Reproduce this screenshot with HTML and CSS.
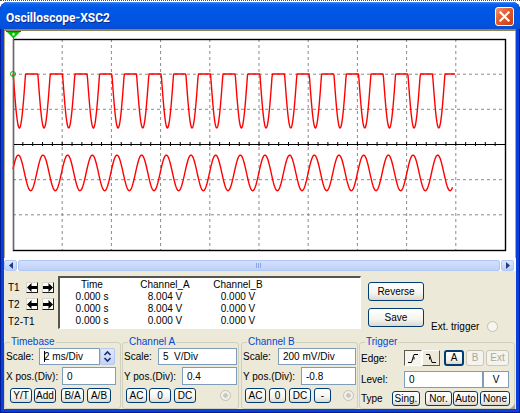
FILE: index.html
```html
<!DOCTYPE html>
<html lang="en">
<head>
    <meta charset="UTF-8">
    <title>Oscilloscope-XSC2</title>
    <link rel="stylesheet" href="styles.css">
</head>
<body>
    <div class="desk-edge"></div>
    <div class="window">
        <div class="titlebar">
            <span class="title">Oscilloscope-XSC2</span>
            <div class="close-btn">
                <svg width="17" height="17" viewBox="0 0 17 17"><path d="M4.5 4.5 L12.5 12.5 M12.5 4.5 L4.5 12.5" stroke="#fff" stroke-width="2.2" stroke-linecap="square"/></svg>
            </div>
        </div>
        <div class="client">
            <div class="screen">
                <svg id="scope" width="510" height="227" viewBox="5 31 510 227">
                    <g class="grid">
                        <line x1="62.2" y1="39" x2="62.2" y2="250"/>
                        <line x1="111.4" y1="39" x2="111.4" y2="250"/>
                        <line x1="160.6" y1="39" x2="160.6" y2="250"/>
                        <line x1="209.8" y1="39" x2="209.8" y2="250"/>
                        <line x1="259" y1="39" x2="259" y2="250"/>
                        <line x1="308.2" y1="39" x2="308.2" y2="250"/>
                        <line x1="357.4" y1="39" x2="357.4" y2="250"/>
                        <line x1="406.6" y1="39" x2="406.6" y2="250"/>
                        <line x1="455.8" y1="39" x2="455.8" y2="250"/>
                        <line x1="13" y1="74.2" x2="505" y2="74.2"/>
                        <line x1="13" y1="109.3" x2="505" y2="109.3"/>
                        <line x1="13" y1="179.7" x2="505" y2="179.7"/>
                        <line x1="13" y1="214.8" x2="505" y2="214.8"/>
                    </g>
                    <line class="axis" x1="13" y1="144.5" x2="505" y2="144.5"/>
                    <g id="ticks" class="axis"></g>
                    <rect class="frame" x="13.5" y="39.5" width="492" height="211"/>
                    <polyline id="trace-a" class="trace" points=""/>
                    <polyline id="trace-b" class="trace" points=""/>
                    <line class="cursor-line" x1="13.5" y1="38" x2="13.5" y2="250"/>
                    <circle cx="13" cy="74" r="2.5" fill="none" stroke="#00b000"/>
                    <line x1="6" y1="31.5" x2="21" y2="31.5" stroke="#ff0000"/>
                    <polygon points="7,32 20,32 13.5,38.5" fill="#00c000"/>
                    <rect x="12.5" y="33" width="2" height="2.5" fill="#fff"/>
                </svg>
            </div>
            <div class="hscroll">
                <div class="sb-btn"><svg width="6" height="7" viewBox="0 0 6 7"><polygon points="5,0 5,7 1,3.5" fill="#233c7c"/></svg></div>
                <div class="sb-track"><span class="grip"></span></div>
                <div class="sb-btn"><svg width="6" height="7" viewBox="0 0 6 7"><polygon points="1,0 1,7 5,3.5" fill="#233c7c"/></svg></div>
            </div>
            <div class="panel">
                <div class="readout-row">
                    <div class="cursors">
                        <span class="c-label">T1</span>
                        <div class="arrow-btn"><svg width="10" height="9" viewBox="0 0 10 9"><polygon points="0,4.5 4.5,0 4.5,3 10,3 10,6 4.5,6 4.5,9"/></svg></div>
                        <div class="arrow-btn"><svg width="10" height="9" viewBox="0 0 10 9"><polygon points="10,4.5 5.5,0 5.5,3 0,3 0,6 5.5,6 5.5,9"/></svg></div>
                        <span class="c-label">T2</span>
                        <div class="arrow-btn"><svg width="10" height="9" viewBox="0 0 10 9"><polygon points="0,4.5 4.5,0 4.5,3 10,3 10,6 4.5,6 4.5,9"/></svg></div>
                        <div class="arrow-btn"><svg width="10" height="9" viewBox="0 0 10 9"><polygon points="10,4.5 5.5,0 5.5,3 0,3 0,6 5.5,6 5.5,9"/></svg></div>
                        <span class="c-label wide">T2-T1</span>
                    </div>
                    <div class="readout">
                        <div class="rd-row"><span>Time</span><span>Channel_A</span><span>Channel_B</span></div>
                        <div class="rd-row"><span>0.000 s</span><span>8.004 V</span><span>0.000 V</span></div>
                        <div class="rd-row"><span>0.000 s</span><span>8.004 V</span><span>0.000 V</span></div>
                        <div class="rd-row"><span>0.000 s</span><span>0.000 V</span><span>0.000 V</span></div>
                    </div>
                    <div class="side-btns">
                        <div class="btn big">Reverse</div>
                        <div class="btn big">Save</div>
                    </div>
                    <div class="ext">
                        <span>Ext. trigger</span>
                        <span class="radio empty"></span>
                    </div>
                </div>

                <div class="groups">
                    <fieldset class="grp timebase">
                        <legend>Timebase</legend>
                        <div class="row r1">
                            <span class="lbl w34">Scale:</span>
                            <div class="field w61"><span class="caret"></span>2 ms/Div</div>
                            <div class="spin">
                                <svg width="9" height="13" viewBox="0 0 9 13"><path d="M1.5 5 L4.5 2 L7.5 5 M1.5 8 L4.5 11 L7.5 8" fill="none" stroke="#1c2f6a" stroke-width="1.6"/></svg>
                            </div>
                        </div>
                        <div class="row r2">
                            <span class="lbl w57">X pos.(Div):</span>
                            <div class="field w54">0</div>
                        </div>
                        <div class="row r3 tb-btns">
                            <div class="btn b1">Y/T</div>
                            <div class="btn b2">Add</div>
                            <div class="btn b3">B/A</div>
                            <div class="btn b4">A/B</div>
                        </div>
                    </fieldset>

                    <fieldset class="grp chan-a">
                        <legend>Channel A</legend>
                        <div class="row r1">
                            <span class="lbl w35">Scale:</span>
                            <div class="field w79">5&nbsp;&nbsp;V/Div</div>
                        </div>
                        <div class="row r2">
                            <span class="lbl w59">Y pos.(Div):</span>
                            <div class="field w55">0.4</div>
                        </div>
                        <div class="row r3 ch-btns">
                            <div class="btn b1">AC</div>
                            <div class="btn b2">0</div>
                            <div class="btn b3">DC</div>
                            <span class="radio"></span>
                        </div>
                    </fieldset>

                    <fieldset class="grp chan-b">
                        <legend>Channel B</legend>
                        <div class="row r1">
                            <span class="lbl w36">Scale:</span>
                            <div class="field w78">200 mV/Div</div>
                        </div>
                        <div class="row r2">
                            <span class="lbl w59">Y pos.(Div):</span>
                            <div class="field w55">-0.8</div>
                        </div>
                        <div class="row r3 ch-btns">
                            <div class="btn b1">AC</div>
                            <div class="btn b2">0</div>
                            <div class="btn b3">DC</div>
                            <div class="btn b4">-</div>
                            <span class="radio"></span>
                        </div>
                    </fieldset>

                    <fieldset class="grp trigger">
                        <legend>Trigger</legend>
                        <div class="row t1">
                            <span class="lbl w44">Edge:</span>
                            <div class="edge-btn pressed">
                                <svg width="12" height="11" viewBox="0 0 12 11"><path d="M1 9.5 H4.5 L7 1.5 H11 M7 4 L7 6.5" fill="none" stroke="#000"/></svg>
                            </div>
                            <div class="edge-btn">
                                <svg width="12" height="11" viewBox="0 0 12 11"><path d="M1 1.5 H4.5 L7 9.5 H11 M4.5 4 L4.5 6.5" fill="none" stroke="#000"/></svg>
                            </div>
                            <div class="btn src src-a">A</div>
                            <div class="btn src src-b off">B</div>
                            <div class="btn src src-ext off">Ext</div>
                        </div>
                        <div class="row t2">
                            <span class="lbl w44">Level:</span>
                            <div class="field w79">0</div>
                            <div class="field unit">V</div>
                        </div>
                        <div class="row t3">
                            <span class="lbl w32">Type</span>
                            <div class="btn b1">Sing.</div>
                            <div class="btn b2">Nor.</div>
                            <div class="btn b3">Auto</div>
                            <div class="btn b4">None</div>
                        </div>
                        <span class="size-grip"></span>
                    </fieldset>
                </div>
            </div>
        </div>
    </div>

    <script src="script.js"></script>
</body>
</html>
```

FILE: styles.css
```css
body {
    margin: 0;
    width: 520px;
    height: 413px;
    overflow: hidden;
    background: #fff;
    font-family: "Liberation Sans", Arial, sans-serif;
    font-size: 10px;
    color: #000;
}

.desk-edge {
    height: 1px;
    border-top: 1px dotted #555;
}

.window {
    height: 411px;
    display: flex;
    flex-direction: column;
    background: #0a3fd8;
    border-radius: 8px 8px 0 0;
    box-shadow: inset 1px 0 #001b98, inset -1px 0 #001b98, inset 0 -1px #001b98;
}

.titlebar {
    height: 27px;
    flex: none;
    display: flex;
    justify-content: space-between;
    align-items: flex-start;
    padding: 0 6px;
    border-radius: 8px 8px 0 0;
    background: linear-gradient(180deg, #4a93fa 0, #0c62ea 2px, #0058e6 6px, #0056e4 50%, #0352de 85%, #0a4ad2 100%);
}

.title {
    margin-top: 4px;
    line-height: 24px;
    color: #fff;
    font-family: Roboto, "Liberation Sans", sans-serif;
    font-weight: bold;
    font-size: 12px;
    text-shadow: 1px 1px 0 #0a2a90;
}

.close-btn {
    width: 17px;
    height: 17px;
    margin-top: 5px;
    border: 1px solid #fff;
    border-radius: 3px;
    background: linear-gradient(135deg, #f3936a 0%, #e35a28 45%, #cc3c16 100%);
}

.close-btn svg {
    display: block;
}

.client {
    flex: 1;
    margin: 0 4px 4px;
    display: flex;
    flex-direction: column;
    background: #ece9d8;
}

.screen {
    height: 227px;
    flex: none;
    border-top: 2px solid #8e8658;
    background: #fff;
    box-shadow: inset 1px 0 #b2ab84, inset -1px 0 #b2ab84;
}

.screen svg {
    display: block;
    margin-left: 1px;
}

.grid line {
    stroke: #8a8a8a;
    stroke-width: 1;
    stroke-dasharray: 3 3;
}

.axis line,
line.axis {
    stroke: #000;
    stroke-width: 1;
}

.frame {
    fill: none;
    stroke: #000;
    stroke-width: 1.4;
}

.trace {
    fill: none;
    stroke: #ff0000;
    stroke-width: 1.4;
    stroke-linejoin: round;
}

.cursor-line {
    stroke: #ff00ff;
    stroke-width: 1;
}

/* scrollbar */

.hscroll {
    height: 13px;
    flex: none;
    box-sizing: border-box;
    padding: 2px 2px 0 0;
    display: flex;
    background: #fff;
}

.sb-btn {
    width: 11px;
    height: 9px;
    border: 1px solid #b4c8f4;
    border-radius: 2px;
    background: linear-gradient(180deg, #dde8fe, #bccff9);
    display: flex;
    align-items: center;
    justify-content: center;
}

.sb-track {
    flex: 1;
    margin: 0 1px;
    height: 9px;
    border: 1px solid #b0c6f4;
    border-radius: 2px;
    background: linear-gradient(180deg, #d3e0fd, #bfd1fa);
    display: flex;
    justify-content: center;
    align-items: center;
}

.grip {
    width: 6px;
    height: 5px;
    background: repeating-linear-gradient(90deg, #8ba8e6 0, #8ba8e6 1px, transparent 1px, transparent 2px);
}

/* lower panel */

.panel {
    flex: 1;
    display: flex;
    flex-direction: column;
}

.readout-row {
    height: 64px;
    display: flex;
}

.cursors {
    width: 54px;
    box-sizing: border-box;
    padding: 11px 0 0 4px;
    display: grid;
    grid-template-columns: 14px 12px 12px;
    grid-template-rows: 11px 12px 12px;
    column-gap: 4px;
    row-gap: 5px;
}

.c-label {
    align-self: end;
    line-height: 11px;
}

.c-label.wide {
    grid-column: 1 / 4;
}

.arrow-btn {
    box-sizing: border-box;
    border: 1px solid;
    border-color: #d8d6cc #1e1e1e #1e1e1e #d8d6cc;
    background: #fbfbf8;
    display: flex;
    align-items: center;
    justify-content: center;
}

.arrow-btn svg {
    display: block;
}

.readout {
    width: 303px;
    height: 53px;
    margin-top: 5px;
    box-sizing: border-box;
    border-style: solid;
    border-width: 2px 1px 1px 2px;
    border-color: #55554c #fff #fff #55554c;
    background: #fff;
    padding-top: 1px;
}

.rd-row {
    display: grid;
    grid-template-columns: 64px 82px 64px;
    text-align: center;
    line-height: 12px;
}

.side-btns {
    width: 56px;
    margin: 11px 0 0 7px;
    display: flex;
    flex-direction: column;
    gap: 7px;
}

.ext {
    margin: 49px 0 0 7px;
    display: flex;
    align-items: center;
    gap: 8px;
    height: 12px;
}

.btn {
    box-sizing: border-box;
    flex: none;
    height: 15px;
    border: 1px solid #003c74;
    border-radius: 3px;
    background: linear-gradient(180deg, #ffffff 0%, #f5f4ef 60%, #dcd8cc 100%);
    display: flex;
    align-items: center;
    justify-content: center;
    line-height: 1;
}

.btn.big {
    height: 19px;
}

.btn.off {
    color: #aca899;
    border-color: #c9c7ba;
    background: #f4f3ee;
}

.radio {
    flex: none;
    width: 9px;
    height: 9px;
    border: 1px solid #c4c2b5;
    border-radius: 50%;
    background: radial-gradient(circle, #c9c7bb 0, #c9c7bb 2px, #f1f0ea 2.5px);
}

.radio.empty {
    background: #f6f5f0;
}

/* group boxes */

.groups {
    height: 73px;
    margin-top: 1px;
    display: flex;
}

.grp {
    box-sizing: border-box;
    height: 73px;
    width: 117px;
    margin: 0;
    padding: 0;
    border: 1px solid #d0d0bf;
    border-radius: 3px;
}

.grp legend {
    margin-left: 5px;
    padding: 0 1px;
    color: #0046d5;
    line-height: 12px;
}

.chan-a {
    margin-left: 1px;
}

.chan-b {
    margin-left: 2px;
}

.trigger {
    position: relative;
    margin-left: 1px;
    width: 156px;
}

.row {
    display: flex;
    align-items: center;
}

.r1 {
    height: 17px;
}

.r2 {
    height: 18px;
    margin-top: 2px;
}

.r3 {
    height: 15px;
    margin-top: 3px;
}

.lbl {
    flex: none;
    box-sizing: border-box;
    padding-left: 1px;
}

.w32 { width: 32px; }
.w34 { width: 34px; }
.w35 { width: 35px; }
.w36 { width: 36px; }
.w44 { width: 44px; }
.w57 { width: 57px; }
.w59 { width: 59px; }

.field {
    flex: none;
    box-sizing: border-box;
    height: 100%;
    border: 1px solid #7f9db9;
    background: #fff;
    padding-left: 4px;
    display: flex;
    align-items: center;
    white-space: nowrap;
}

.w54 { width: 54px; }
.w55 { width: 55px; }
.w61 { width: 61px; }
.w78 { width: 78px; }
.w79 { width: 79px; }

.field.unit {
    width: 26px;
    padding-left: 0;
    justify-content: center;
}

.caret {
    width: 1px;
    height: 11px;
    background: #000;
    margin-right: -1px;
}

.spin {
    width: 15px;
    height: 100%;
    box-sizing: border-box;
    border: 1px solid #b6c8ee;
    border-radius: 2px;
    background: linear-gradient(180deg, #dfe8fd, #c3d4f8);
    display: flex;
    align-items: center;
    justify-content: center;
}

.tb-btns {
    padding-left: 5px;
}

.tb-btns .b1 { width: 22px; }
.tb-btns .b2 { width: 22px; margin-left: 2px; }
.tb-btns .b3 { width: 23px; margin-left: 5px; }
.tb-btns .b4 { width: 24px; margin-left: 3px; }

.ch-btns {
    padding-left: 3px;
}

.ch-btns .b1 { width: 21px; }
.ch-btns .b2 { width: 22px; margin-left: 2px; }
.ch-btns .b3 { width: 22px; margin-left: 3px; }
.ch-btns .b4 { width: 17px; margin-left: 3px; }
.ch-btns .radio { margin-left: 24px; }

.chan-b .ch-btns .b2 { width: 17px; margin-left: 3px; }
.chan-b .ch-btns .radio { margin-left: 12px; }

.t1 {
    height: 16px;
    margin-top: 2px;
}

.t2 {
    height: 17px;
    margin-top: 5px;
}

.t3 {
    height: 15px;
    margin-top: 3px;
}

.edge-btn {
    flex: none;
    box-sizing: border-box;
    width: 18px;
    height: 16px;
    border: 1px solid;
    border-color: #fff #5a5a50 #5a5a50 #fff;
    background: #ece9d8;
    display: flex;
    align-items: center;
    justify-content: center;
}

.edge-btn.pressed {
    border-color: #5a5a50 #fff #fff #5a5a50;
    background: #f6f5f0;
}

.btn.src {
    height: 16px;
}

.src-a { width: 20px; margin-left: 4px; border-width: 2px; }
.src-b { width: 18px; margin-left: 2px; }
.src-ext { width: 23px; margin-left: 2px; }

.t3 .b1 { width: 28px; }
.t3 .b2 { width: 27px; margin-left: 5px; }
.t3 .b3 { width: 25px; margin-left: 1px; }
.t3 .b4 { width: 30px; margin-left: 2px; }

.size-grip {
    position: absolute;
    right: -1px;
    bottom: -1px;
    width: 5px;
    height: 5px;
    background: radial-gradient(circle at 1px 1px, #a8a594 0.8px, transparent 1px) 0 0 / 2px 2px;
    clip-path: polygon(100% 0, 100% 100%, 0 100%);
}
```

FILE: script.js
```js
const period = 24.67;
const svgNS = 'http://www.w3.org/2000/svg';

function drawTrace(id, x0, x1, fn) {
    const pts = [];
    for (let x = x0; x <= x1; x += 0.5) {
        pts.push(x.toFixed(1) + ',' + fn(x).toFixed(1));
    }
    document.getElementById(id).setAttribute('points', pts.join(' '));
}

// channel A: clipped wave, flat top, rounded bottom
drawTrace('trace-a', 13, 455, function (x) {
    const u = Math.cos(2 * Math.PI * (x - 31.7) / period);
    return 101 - 27 * Math.min(1, 2 * u + 1);
});

// channel B: plain sine
drawTrace('trace-b', 13, 452.7, function (x) {
    return 172.9 - 17.8 * Math.cos(2 * Math.PI * (x - 18.3) / period);
});

// minor ticks on the centre line
const ticks = document.getElementById('ticks');
for (let i = 1; i < 50; i++) {
    const x = 13 + i * 9.84;
    const l = document.createElementNS(svgNS, 'line');
    l.setAttribute('x1', x);
    l.setAttribute('y1', 142);
    l.setAttribute('x2', x);
    l.setAttribute('y2', 146);
    ticks.appendChild(l);
}
```
